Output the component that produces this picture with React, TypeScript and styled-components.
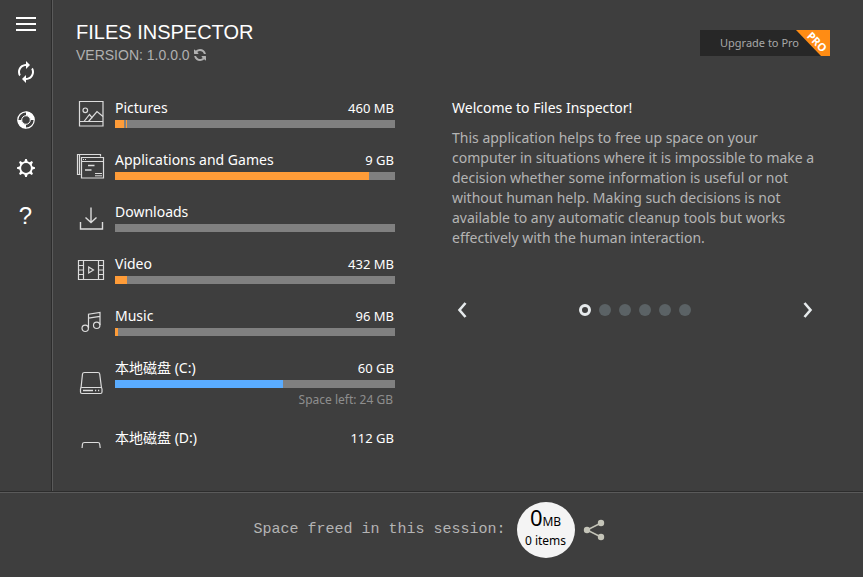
import React from "react";
import styled, { createGlobalStyle } from "styled-components";

const UI_FONT = `"Noto Sans", "Noto Sans CJK SC", sans-serif`;

const GlobalStyle = createGlobalStyle`
  *, *::before, *::after { box-sizing: border-box; }
  body { margin: 0; background: #3e3e3e; color: #fff; font-family: ${UI_FONT}; }
  button { border: 0; padding: 0; background: none; color: inherit; font: inherit; cursor: pointer; }
  h1, h2, p, ul, ol { margin: 0; padding: 0; font-weight: 400; list-style: none; }
  svg { display: block; }
`;

const Window = styled.div`
  display: flex;
  flex-direction: column;
  height: 100vh;
`;

const Workspace = styled.div`
  display: flex;
  flex: 1;
  min-height: 0;
`;

const Sidebar = styled.nav`
  display: flex;
  flex-direction: column;
  flex: none;
  border-right: 1px solid #2c2c2c;
`;

const SidebarButton = styled.button`
  display: grid;
  place-items: center;
  width: 51px;
  height: 48px;
  color: #fff;
`;

const HelpMark = styled.span`
  font: 24px/24px "Liberation Sans", sans-serif;
`;

const Main = styled.main`
  display: flex;
  flex-direction: column;
  flex: 1;
  min-width: 0;
  padding: 20px 33px 43px 23px;
  border-left: 1px solid #5a5a5a;
`;

const Header = styled.header`
  display: flex;
  justify-content: space-between;
  align-items: flex-start;
  height: 78px;
  flex: none;
`;

const Title = styled.h1`
  font: 20px/24px "Liberation Sans", sans-serif;
`;

const Version = styled.div`
  display: flex;
  align-items: center;
  gap: 4px;
  color: #b0b0b0;
  font: 14px/22px "Liberation Sans", sans-serif;
`;

const UpgradeButton = styled.button`
  position: relative;
  width: 130px;
  height: 26px;
  margin-top: 10px;
  padding-left: 20px;
  background: #272727;
  color: #a8a8a8;
  font-size: 11px;
  line-height: 26px;
  text-align: left;
`;

const Ribbon = styled.svg`
  position: absolute;
  top: 0;
  right: 0;
`;

const Columns = styled.div`
  display: grid;
  grid-template-columns: 319fr 378fr;
  grid-template-rows: minmax(0, 1fr);
  column-gap: 57px;
  flex: 1;
  min-height: 0;
`;

const LocationList = styled.ul`
  display: flex;
  flex-direction: column;
  gap: 22px;
  overflow: hidden;
`;

const LocationRow = styled.li`
  display: flex;
  flex: none;
  align-items: center;
  gap: 9px;
`;

const LocationBody = styled.div`
  flex: 1;
  min-width: 0;
`;

const LocationLabel = styled.div`
  display: flex;
  justify-content: space-between;
  padding-right: 1px;
  margin-bottom: 2px;
  font-size: 14px;
  line-height: 20px;
`;

const LocationSize = styled.span`
  font-size: 13px;
`;

const Track = styled.div`
  display: flex;
  gap: 2px;
  height: 8px;
  background: #808080;
`;

const Fill = styled.div<{ $color: string }>`
  background: ${(p) => p.$color};
`;

const SpaceLeft = styled.div`
  height: 18px;
  padding: 3px 2px 0 0;
  color: #8e8e8e;
  font-size: 12px;
  line-height: 18px;
  text-align: right;
`;

const Welcome = styled.section`
  padding-right: 12px;
`;

const WelcomeTitle = styled.h2`
  margin-bottom: 10px;
  font-size: 14px;
  line-height: 20px;
`;

const WelcomeText = styled.p`
  color: #b4b4b4;
  font-size: 14px;
  line-height: 20px;
`;

const Pager = styled.div`
  display: flex;
  justify-content: space-between;
  align-items: center;
  margin-top: 52px;
  padding: 0 5px;
`;

const PagerArrow = styled.button`
  display: grid;
  place-items: center;
  width: 10px;
  height: 20px;
  color: #e6eaec;
`;

const Dots = styled.div`
  display: flex;
  gap: 8px;
`;

const Dot = styled.button<{ $active: boolean }>`
  width: 12px;
  height: 12px;
  border-radius: 50%;
  ${(p) => (p.$active ? "border: 3px solid #e6eaec;" : "background: #5b6265;")}
`;

const Footer = styled.footer`
  display: flex;
  flex: none;
  justify-content: center;
  align-items: center;
  height: 86px;
  padding: 0 5px 10px 0;
  border-top: 1px solid #2c2c2c;
  box-shadow: inset 0 1px #5a5a5a;
`;

const FooterText = styled.span`
  margin-right: 11px;
  color: #b4b4b4;
  font: 15px/20px "Liberation Mono", monospace;
`;

const Freed = styled.div`
  display: flex;
  flex-direction: column;
  align-items: center;
  width: 58px;
  height: 56px;
  padding-top: 4px;
  border-radius: 50%;
  background: #f4f4f4;
  color: #000;
  font-size: 12px;
  line-height: 16px;
`;

const FreedAmount = styled.span`
  line-height: 22px;
`;

const FreedNumber = styled.span`
  font-size: 22px;
`;

const ShareButton = styled.button`
  margin-left: 8px;
`;

const Line = ({ children }: { children: React.ReactNode }) => (
  <svg width="30" height="30" viewBox="0 0 30 30" fill="none" stroke="#dcdcdc" strokeWidth="1.2" aria-hidden="true">
    {children}
  </svg>
);

const PicturesIcon = () => (
  <Line>
    <path d="M3.5 3.5h23.500v24.500h-23.500zM3.500 23.500h23.500" />
    <circle cx="9.300" cy="12.300" r="2.300" />
    <path d="M8 23.500l5.500-7 3 3.700M12.500 23.500l8.500-10 6 5" />
  </Line>
);

const AppsIcon = () => (
  <Line>
    <path d="M24.500 6.500v-2h-23v20h3M3.500 4.500v20" />
    <path d="M5.500 7.500h22v20.500h-22zM5.500 11.500h22" />
    <path d="M7 9.500h4" strokeDasharray="1 1" />
    <path d="M12 15.500h6.500M9 20h6.500" strokeWidth="1.600" />
    <path d="M19 23.500h7M19 25.800h7" strokeWidth="1" />
  </Line>
);

const DownloadsIcon = () => (
  <Line>
    <path d="M15 5.500v15M9.500 15.500l5.500 5 5.500-5" strokeWidth="1.400" />
    <path d="M4.500 20v7h22v-7" strokeWidth="1.400" />
  </Line>
);

const VideoIcon = () => (
  <Line>
    <path d="M2.500 6.500h25v19h-25zM7.500 6.500v19M22.500 6.500v19" />
    <path d="M2.500 11.500h5M2.500 16h5M2.500 20.500h5M22.500 11.500h5M22.500 16h5M22.500 20.500h5" />
    <path d="M12.700 13l4.800 3-4.800 3z" />
  </Line>
);

const MusicIcon = () => (
  <Line>
    <circle cx="9.200" cy="22.300" r="3.200" />
    <circle cx="20.700" cy="19.300" r="3.200" />
    <path d="M12.500 22V8.200l11.500-1.800V19M12.500 12.200l11.500-1.800" />
  </Line>
);

const DiskIcon = () => (
  <Line>
    <path d="M5 21L6.500 7q.2-1.500 2-1.500h13.500q1.500 0 1.700 1.500L25.500 21" />
    <rect x="4.500" y="20.500" width="21.500" height="6" rx="1.500" />
    <path d="M7 23.500h10M19 23.500h1.200M22 23.500h1.200" strokeWidth="1.400" />
  </Line>
);

const MenuIcon = () => (
  <svg width="24" height="24" viewBox="0 0 24 24" stroke="currentColor" strokeWidth="2.200" aria-hidden="true">
    <path d="M2 6h20M2 12h20M2 18h20" />
  </svg>
);

const RescanIcon = () => (
  <svg width="24" height="24" viewBox="0 0 24 24" fill="currentColor" aria-hidden="true">
    <path d="M12 6v3l4-4-4-4v3c-4.420 0-8 3.580-8 8 0 1.570.460 3.030 1.240 4.260L6.700 14.800c-.450-.830-.700-1.790-.700-2.800 0-3.310 2.690-6 6-6zm6.760 1.740L17.300 9.200c.440.840.700 1.790.700 2.800 0 3.310-2.690 6-6 6v-3l-4 4 4 4v-3c4.420 0 8-3.580 8-8 0-1.570-.460-3.030-1.240-4.260z" />
  </svg>
);

const LifebuoyIcon = () => (
  <svg width="24" height="24" viewBox="0 0 24 24" fill="none" stroke="currentColor" aria-hidden="true">
    <circle cx="12" cy="12" r="8.200" strokeWidth="1.200" />
    <circle cx="12" cy="12" r="4.300" strokeWidth="1" />
    <path d="M12 5.500a6.500 6.500 0 0 1 6.500 6.500M12 18.500a6.500 6.500 0 0 1-6.500-6.500" strokeWidth="4" />
  </svg>
);

const GearIcon = () => (
  <svg width="24" height="24" viewBox="0 0 24 24" fill="none" stroke="currentColor" aria-hidden="true">
    <circle cx="12" cy="12" r="5.800" strokeWidth="1.800" />
    {[0, 45, 90, 135, 180, 225, 270, 315].map((angle) => (
      <path key={angle} d="M10.200 6.200L11.200 3h1.600L13.800 6.200z" fill="currentColor" stroke="none" transform={`rotate(${angle} 12 12)`} />
    ))}
  </svg>
);

const RefreshIcon = () => (
  <svg width="12" height="12" viewBox="0 0 1536 1536" fill="currentColor" aria-hidden="true">
    <path
      transform="matrix(-1 0 0 1 1536 0)"
      d="M1511 928q0 5-1 7-64 268-268 434.500t-478 166.500q-146 0-282.500-55t-243.500-157l-129 129q-19 19-45 19t-45-19-19-45v-448q0-26 19-45t45-19h448q26 0 45 19t19 45-19 45l-137 137q71 66 161 102t187 36q134 0 250-65t186-179q11-17 53-117 8-23 30-23h192q13 0 22.500 9.500t9.500 22.500zm25-800v448q0 26-19 45t-45 19h-448q-26 0-45-19t-19-45 19-45l138-138q-148-137-349-137-134 0-250 65t-186 179q-11 17-53 117-8 23-30 23h-199q-13 0-22.500-9.500t-9.500-22.500v-7q65-268 270-434.500t480-166.500q146 0 284 55.500t245 156.500l130-129q19-19 45-19t45 19 19 45z"
    />
  </svg>
);

const Chevron = ({ d }: { d: string }) => (
  <svg width="10" height="16" viewBox="0 0 10 16" fill="none" stroke="currentColor" strokeWidth="2.600" aria-hidden="true">
    <path d={d} />
  </svg>
);

const ShareIcon = () => (
  <svg width="22" height="22" viewBox="0 0 22 22" fill="#c4c4b8" aria-hidden="true">
    <path d="M18 4L4 11l14 7" fill="none" stroke="#c4c4b8" strokeWidth="1.400" />
    <circle cx="4" cy="11" r="3.200" />
    <circle cx="18" cy="4" r="3.200" />
    <circle cx="18" cy="18" r="3.200" />
  </svg>
);

const ORANGE = "#ff9c38";
const BLUE = "#5aacff";

type Location = {
  name: string;
  icon: () => React.ReactElement;
  size?: string;
  color?: string;
  fills: number[];
  disk?: boolean;
  left?: string;
};

const locations: Location[] = [
  { name: "Pictures", icon: PicturesIcon, size: "460 MB", fills: [3.2, 0.4] },
  { name: "Applications and Games", icon: AppsIcon, size: "9 GB", fills: [90.7] },
  { name: "Downloads", icon: DownloadsIcon, fills: [] },
  { name: "Video", icon: VideoIcon, size: "432 MB", fills: [4.3] },
  { name: "Music", icon: MusicIcon, size: "96 MB", fills: [1] },
  { name: "本地磁盘 (C:)", icon: DiskIcon, size: "60 GB", color: BLUE, fills: [60], disk: true, left: "Space left: 24 GB" },
  { name: "本地磁盘 (D:)", icon: DiskIcon, size: "112 GB", color: BLUE, fills: [], disk: true },
];

const tools = [
  { label: "Menu", icon: <MenuIcon /> },
  { label: "Rescan", icon: <RescanIcon /> },
  { label: "Support", icon: <LifebuoyIcon /> },
  { label: "Settings", icon: <GearIcon /> },
  { label: "Help", icon: <HelpMark>?</HelpMark> },
];

export default function App() {
  const [page, setPage] = React.useState(0);
  return (
    <>
      <GlobalStyle />
      <Window>
        <Workspace>
          <Sidebar>
            {tools.map((tool) => (
              <SidebarButton key={tool.label} aria-label={tool.label}>
                {tool.icon}
              </SidebarButton>
            ))}
          </Sidebar>
          <Main>
            <Header>
              <div>
                <Title>FILES INSPECTOR</Title>
                <Version>
                  VERSION: 1.0.0.0
                  <button aria-label="Check for updates">
                    <RefreshIcon />
                  </button>
                </Version>
              </div>
              <UpgradeButton>
                Upgrade to Pro
                <Ribbon width="34" height="26" viewBox="0 0 34 26" overflow="visible" aria-hidden="true">
                  <path d="M0 0h34v26h-9z" fill="#ff8c14" />
                  <text x="21" y="16" transform="rotate(45 21 12)" fill="#fff" fontSize="11" fontWeight="700" textAnchor="middle">
                    PRO
                  </text>
                </Ribbon>
              </UpgradeButton>
            </Header>
            <Columns>
              <LocationList>
                {locations.map(({ name, icon: Icon, size, color = ORANGE, fills, disk, left }) => (
                  <LocationRow key={name}>
                    <Icon />
                    <LocationBody>
                      <LocationLabel>
                        {name}
                        {size && <LocationSize>{size}</LocationSize>}
                      </LocationLabel>
                      <Track>
                        {fills.map((width) => (
                          <Fill key={width} $color={color} style={{ width: `${width}%` }} />
                        ))}
                      </Track>
                      {disk && <SpaceLeft>{left}</SpaceLeft>}
                    </LocationBody>
                  </LocationRow>
                ))}
              </LocationList>
              <Welcome>
                <WelcomeTitle>Welcome to Files Inspector!</WelcomeTitle>
                <WelcomeText>
                  This application helps to free up space on your computer in situations where it is impossible to make
                  a decision whether some information is useful or not without human help. Making such decisions is not
                  available to any automatic cleanup tools but works effectively with the human interaction.
                </WelcomeText>
                <Pager>
                  <PagerArrow aria-label="Previous" onClick={() => setPage((page + 5) % 6)}>
                    <Chevron d="M8.500 1L2.500 8l6 7" />
                  </PagerArrow>
                  <Dots>
                    {[0, 1, 2, 3, 4, 5].map((i) => (
                      <Dot key={i} $active={i === page} aria-label={`Page ${i + 1}`} onClick={() => setPage(i)} />
                    ))}
                  </Dots>
                  <PagerArrow aria-label="Next" onClick={() => setPage((page + 1) % 6)}>
                    <Chevron d="M1.500 1l6 7-6 7" />
                  </PagerArrow>
                </Pager>
              </Welcome>
            </Columns>
          </Main>
        </Workspace>
        <Footer>
          <FooterText>Space freed in this session:</FooterText>
          <Freed>
            <FreedAmount>
              <FreedNumber>0</FreedNumber>MB
            </FreedAmount>
            <span>0 items</span>
          </Freed>
          <ShareButton aria-label="Share">
            <ShareIcon />
          </ShareButton>
        </Footer>
      </Window>
    </>
  );
}
